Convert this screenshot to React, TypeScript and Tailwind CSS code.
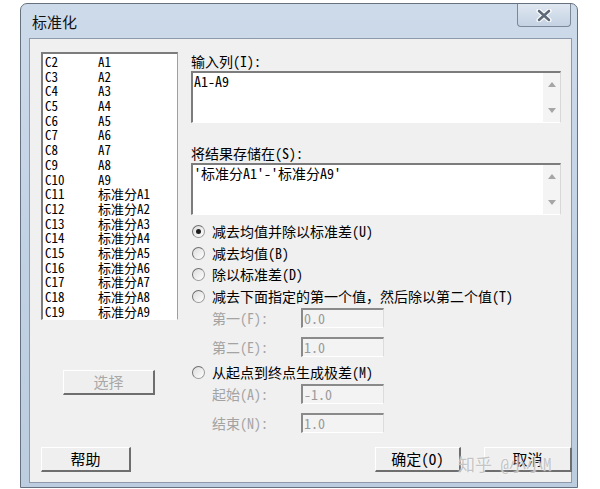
import React from "react"

const sim =
  "font-['Noto_Sans_Mono_CJK_SC','Noto_Sans_CJK_SC','Liberation_Mono',monospace]"

const columns = [
  ["C2", "A1"],
  ["C3", "A2"],
  ["C4", "A3"],
  ["C5", "A4"],
  ["C6", "A5"],
  ["C7", "A6"],
  ["C8", "A7"],
  ["C9", "A8"],
  ["C10", "A9"],
  ["C11", "标准分A1"],
  ["C12", "标准分A2"],
  ["C13", "标准分A3"],
  ["C14", "标准分A4"],
  ["C15", "标准分A5"],
  ["C16", "标准分A6"],
  ["C17", "标准分A7"],
  ["C18", "标准分A8"],
  ["C19", "标准分A9"],
]

const methods = [
  { label: "减去均值并除以标准差(U)", checked: true },
  { label: "减去均值(B)" },
  { label: "除以标准差(D)" },
  { label: "减去下面指定的第一个值，然后除以第二个值(T)" },
]

function Radio({ checked }: { checked?: boolean }) {
  return (
    <span className="flex h-[13px] w-[13px] shrink-0 items-center justify-center rounded-full border border-[#9a9a9a] border-t-[#6f6f6f] border-l-[#6f6f6f] bg-gradient-to-br from-[#dcdcdc] to-white">
      {checked && <span className="h-[5px] w-[5px] rounded-full bg-[#1e1e1e]" />}
    </span>
  )
}

function TextArea({ value }: { value: string }) {
  return (
    <div className="flex h-[52px] w-[370px] border-t-2 border-l-2 border-b border-r border-t-[#7c7c7c] border-l-[#7c7c7c] border-b-white border-r-[#d8d8d8] bg-white">
      <div className="flex-1 pl-[1px] text-[14px] leading-[16px] text-black">
        {value}
      </div>
      <div className="flex w-[17px] flex-col items-center justify-between bg-[#f4f4f4] py-[9px]">
        <svg width="8" height="5" viewBox="0 0 8 5">
          <path d="M0 5 L4 0 L8 5 Z" fill="#a6a6a6" />
        </svg>
        <svg width="8" height="5" viewBox="0 0 8 5">
          <path d="M0 0 L8 0 L4 5 Z" fill="#a6a6a6" />
        </svg>
      </div>
    </div>
  )
}

function Field({ label, value }: { label: string; value: string }) {
  return (
    <div className="flex h-[22px] items-center pl-[21px]">
      <span className="w-[89px] text-[14px] text-[#a3a3a3]">{label}</span>
      <div className="flex h-[20px] w-[83px] items-center border-t-2 border-l-2 border-b border-r border-t-[#8a8a8a] border-l-[#8a8a8a] border-b-white border-r-[#dcdcdc] bg-[#f3f3f3] pl-[1px] text-[14px] text-[#9a9a9a]">
        {value}
      </div>
    </div>
  )
}

function Button({
  label,
  width,
  disabled,
}: {
  label: string
  width: string
  disabled?: boolean
}) {
  return (
    <div
      className={`flex h-[25px] items-center justify-center border-t border-l border-b-2 border-r-2 border-t-white border-l-white border-b-[#6e6e6e] border-r-[#6e6e6e] bg-[#efefef] text-[15px] ${width} ${
        disabled ? "text-[#a8a8a8]" : "text-black"
      }`}
    >
      {label}
    </div>
  )
}

export default function App() {
  return (
    <div className={`min-h-[489px] w-[600px] bg-white pl-[20px] pt-[3px] ${sim}`}>
      <div className="flex w-[558px] flex-col rounded-t-[7px] border border-[#66717f] bg-gradient-to-b from-[#cddaea] via-[#c2d2e5] to-[#bdcde0] pb-[4px] pl-[8px] pr-[5px]">
        {/* 标题栏 */}
        <div className="flex h-[34px] items-start justify-between">
          <span className="pl-[3px] pt-[9px] text-[15px] leading-[18px] text-[#111]">
            标准化
          </span>
          <div className="mr-[1px] flex h-[23px] w-[54px] items-center justify-center rounded-b-[4px] border border-t-0 border-[#7c8898] bg-gradient-to-b from-[#dfe7f1] to-[#c4d2e3]">
            <svg width="16" height="13" viewBox="0 0 16 13">
              <path
                d="M3 2 L13 11 M13 2 L3 11"
                stroke="#ffffff"
                strokeWidth="5"
                strokeLinecap="round"
              />
              <path
                d="M3 2 L13 11 M13 2 L3 11"
                stroke="#5e6a7a"
                strokeWidth="2.6"
                strokeLinecap="round"
              />
            </svg>
          </div>
        </div>

        {/* 对话框主体 */}
        <div className="flex h-[445px] flex-col border border-[#8d9aab] bg-[#f0f0f0] pl-[11px] pt-[13px]">
          <div className="flex h-[382px] gap-[13px]">
            <div className="flex w-[137px] flex-col">
              <div className="h-[268px] border-t-2 border-l-2 border-b border-r border-t-[#7c7c7c] border-l-[#7c7c7c] border-b-white border-r-[#a0a0a0] bg-white pl-[2px] pt-[1px]">
                {columns.map(([c, name]) => (
                  <div
                    key={c}
                    className="grid h-[14.7px] grid-cols-[53px_1fr] items-center text-[13px] leading-[14.7px] text-black"
                  >
                    <span>{c}</span>
                    <span>{name}</span>
                  </div>
                ))}
              </div>
              <div className="ml-[22px] mt-[50px]">
                <Button label="选择" width="w-[92px]" disabled />
              </div>
            </div>

            <div className="flex w-[370px] flex-col">
              <div className="flex h-[19px] items-center text-[14px] text-black">
                输入列(I):
              </div>
              <TextArea value="A1-A9" />
              <div className="mt-[20px] flex h-[20px] items-center text-[14px] text-black">
                将结果存储在(S):
              </div>
              <TextArea value="'标准分A1'-'标准分A9'" />

              <div className="mt-[6px] flex flex-col">
                {methods.map((m) => (
                  <div
                    key={m.label}
                    className="flex h-[21.5px] items-center gap-[7px] pl-[1px] text-[14px] text-black"
                  >
                    <Radio checked={m.checked} />
                    <span>{m.label}</span>
                  </div>
                ))}
              </div>
              <Field label="第一(F):" value="0.0" />
              <div className="mt-[7px]">
                <Field label="第二(E):" value="1.0" />
              </div>
              <div className="mt-[3px] flex h-[22px] items-center gap-[7px] pl-[1px] text-[14px] text-black">
                <Radio />
                <span>从起点到终点生成极差(M)</span>
              </div>
              <Field label="起始(A):" value="-1.0" />
              <div className="mt-[7px]">
                <Field label="结束(N):" value="1.0" />
              </div>
            </div>
          </div>

          <div className="relative mt-[13px] flex w-[531px] items-center">
            <Button label="帮助" width="w-[90px]" />
            <div className="ml-auto flex gap-[23px]">
              <Button label="确定(O)" width="w-[86px]" />
              <Button label="取消" width="w-[88px]" />
            </div>
            <span className="absolute left-[417px] top-[4px] whitespace-nowrap text-[17px] text-[#c4c4c4] [text-shadow:0_0_2px_#ffffff]">
              知乎 @小小M
            </span>
          </div>
        </div>
      </div>
    </div>
  )
}
